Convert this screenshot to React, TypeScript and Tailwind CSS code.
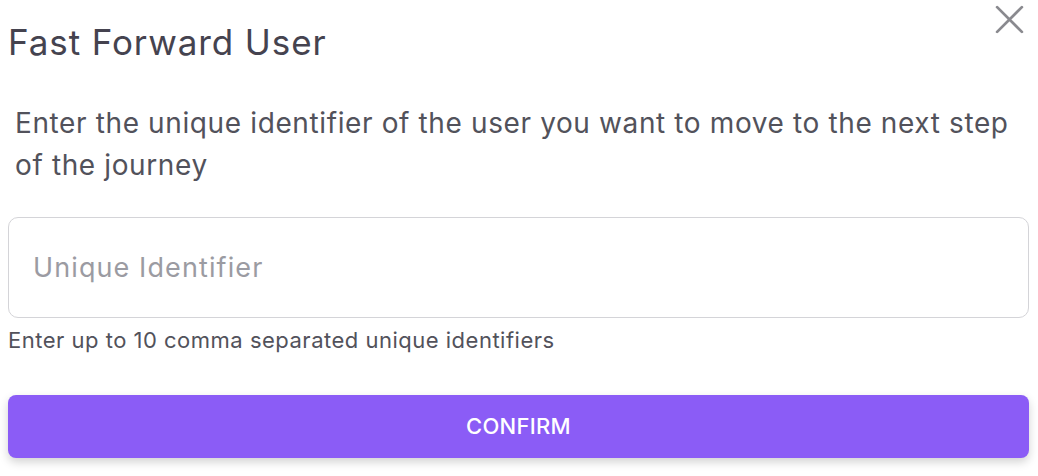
export default function App() {
  return (
    <div className="h-[476px] w-[1038px] overflow-hidden bg-white font-['Inter',sans-serif]">
      <div className="flex items-start justify-between pl-2 pr-3">
        <h2 className="pt-[20px] text-[35px] leading-[44px] font-normal tracking-[0.9px] text-[#45434f]">
          Fast Forward User
        </h2>
        <button className="mt-[3px] text-[#8a8a8f]" aria-label="Close">
          <svg width="33" height="33" viewBox="0 0 24 24" fill="none" stroke="currentColor" strokeWidth="2" strokeLinecap="round">
            <path d="M3 3l18 18M21 3L3 21" />
          </svg>
        </button>
      </div>

      <p className="mt-[38px] pl-[15px] pr-6 text-[28px] leading-[42px] tracking-[0.62px] text-[#52525b]">
        Enter the unique identifier of the user you want to move to the next step of the journey
      </p>

      <div className="mt-[31px] px-2 pr-[9px]">
        <input
          placeholder="Unique Identifier"
          className="h-[101px] w-full rounded-[10px] border border-[#d4d4d8] px-6 text-[27px] tracking-[1.1px] text-[#27272a] placeholder:text-[#9b9ba2] outline-none"
        />
        <p className="mt-[8px] text-[22px] leading-[28px] tracking-[0.5px] text-[#52525b]">
          Enter up to 10 comma separated unique identifiers
        </p>
      </div>

      <div className="mt-[41px] px-2 pr-[9px]">
        <button className="h-[63px] w-full rounded-[8px] bg-[#8b5cf6] text-[22px] font-medium tracking-[0.3px] text-white shadow-[0_4px_10px_rgba(0,0,0,0.18)]">
          CONFIRM
        </button>
      </div>
    </div>
  );
}
